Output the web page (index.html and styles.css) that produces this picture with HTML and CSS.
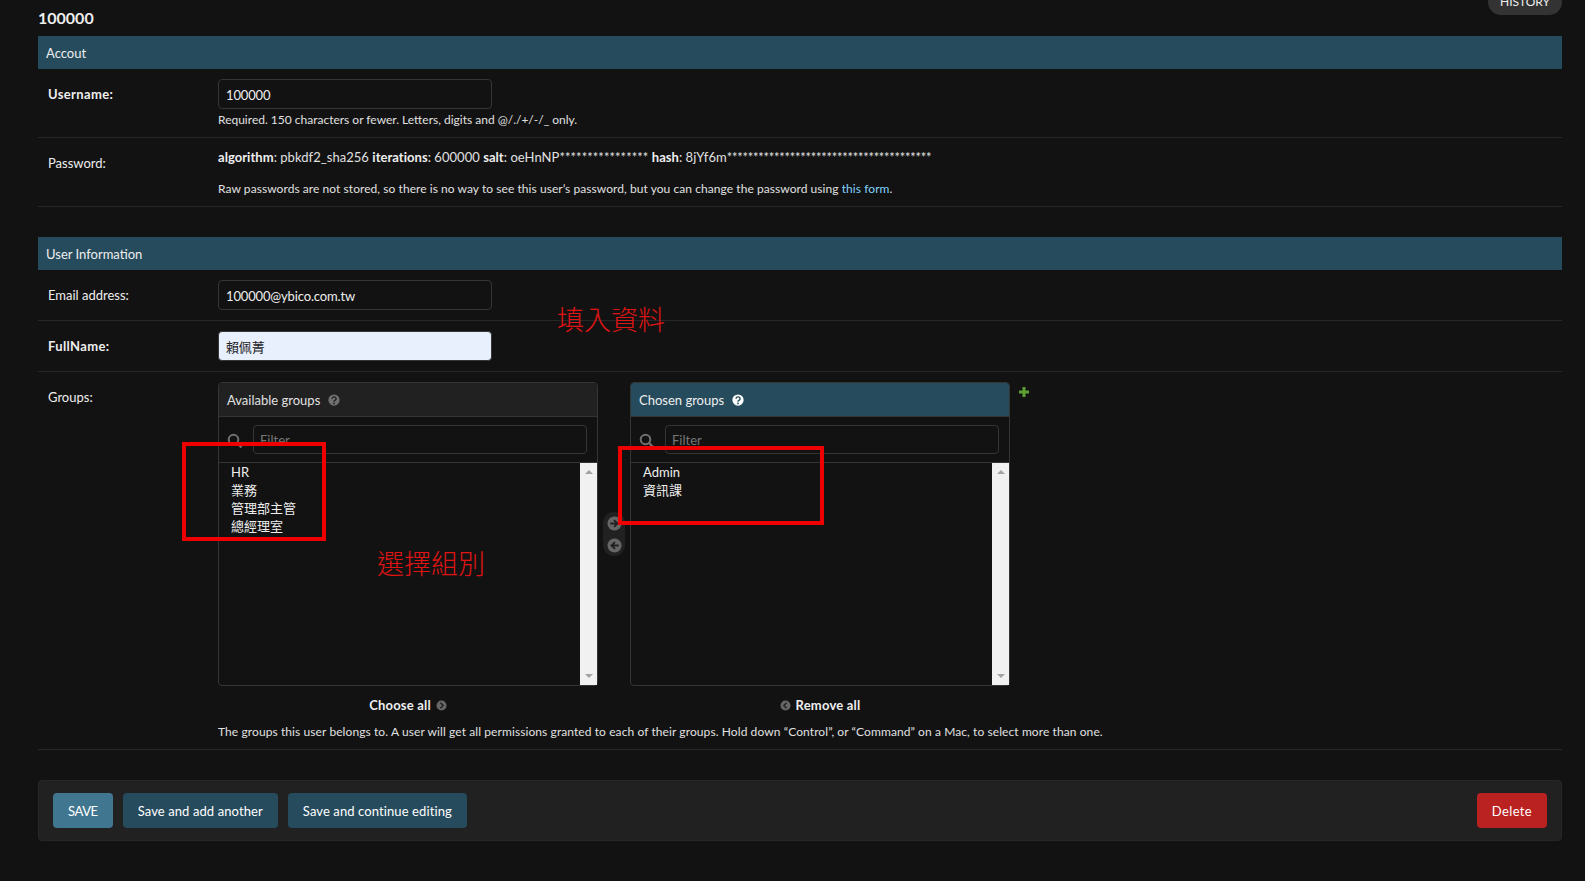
FILE: index.html
```html
<!DOCTYPE html>
<html lang="zh-Hant">
<head>
  <meta charset="UTF-8">
  <title>100000 | Change user</title>
  <link rel="stylesheet" href="styles.css">
</head>
<body>

<div class="content">
  <div class="title-row">
    <h2>100000</h2>
    <a class="history" href="#">History</a>
  </div>

  <form>
    <fieldset>
      <h3 class="bar">Accout</h3>
      <div class="row">
        <label class="required">Username:</label>
        <div class="field">
          <input class="text" type="text" value="100000">
          <p class="help">Required. 150 characters or fewer. Letters, digits and @/./+/-/_ only.</p>
        </div>
      </div>
      <div class="row row-pass">
        <label>Password:</label>
        <div class="field">
          <p class="hash"><strong>algorithm</strong>: pbkdf2_sha256 <strong>iterations</strong>: 600000 <strong>salt</strong>: oeHnNP**************** <strong>hash</strong>: 8jYf6m<span class="mask">***************************************</span></p>
          <p class="help raw">Raw passwords are not stored, so there is no way to see this user’s password, but you can change the password using <a href="#">this form</a>.</p>
        </div>
      </div>
    </fieldset>

    <fieldset>
      <h3 class="bar">User Information</h3>
      <div class="row">
        <label>Email address:</label>
        <div class="field"><input class="text" type="text" value="100000@ybico.com.tw"></div>
      </div>
      <div class="row">
        <label class="required">FullName:</label>
        <div class="field"><input class="text autofill" type="text" value="賴佩菁"></div>
      </div>
      <div class="row">
        <label>Groups:</label>
        <div class="field">
          <div class="selector-wrap">
            <div class="selector">
              <div class="box">
                <div class="box-title">Available groups
                  <svg class="q" viewBox="0 0 16 16"><circle cx="8" cy="8" r="7.5" fill="#707070"/><path d="M5.4 6.2a2.7 2.4 0 1 1 3.9 2.2c-.9.5-1.3.9-1.3 1.8" fill="none" stroke="#212121" stroke-width="1.9"/><circle cx="8" cy="12.6" r="1.2" fill="#212121"/></svg>
                </div>
                <div class="filter">
                  <svg class="search" viewBox="0 0 16 16"><circle cx="6.5" cy="6.5" r="4.8" fill="none" stroke="#707070" stroke-width="2"/><path d="M10 10l4.5 4.5" stroke="#707070" stroke-width="2.4"/></svg>
                  <input class="filter-input" type="text" placeholder="Filter">
                </div>
                <div class="list">
                  <ul>
                    <li>HR</li>
                    <li>業務</li>
                    <li>管理部主管</li>
                    <li>總經理室</li>
                  </ul>
                  <div class="scrollbar"><i class="up"></i><i class="down"></i></div>
                </div>
              </div>

              <div class="arrows">
                <svg viewBox="0 0 16 16"><circle cx="8" cy="8" r="7.5" fill="#666"/><path d="M3.5 8h7M7.5 4.4L11.2 8l-3.7 3.6" fill="none" stroke="#212121" stroke-width="2"/></svg>
                <svg viewBox="0 0 16 16"><circle cx="8" cy="8" r="7.5" fill="#666"/><path d="M12.5 8h-7M8.5 4.4L4.8 8l3.7 3.6" fill="none" stroke="#212121" stroke-width="2"/></svg>
              </div>

              <div class="box">
                <div class="box-title chosen">Chosen groups
                  <svg class="q" viewBox="0 0 16 16"><circle cx="8" cy="8" r="7.5" fill="#fff"/><path d="M5.4 6.2a2.7 2.4 0 1 1 3.9 2.2c-.9.5-1.3.9-1.3 1.8" fill="none" stroke="#264b5d" stroke-width="1.9"/><circle cx="8" cy="12.6" r="1.2" fill="#264b5d"/></svg>
                </div>
                <div class="filter">
                  <svg class="search" viewBox="0 0 16 16"><circle cx="6.5" cy="6.5" r="4.8" fill="none" stroke="#707070" stroke-width="2"/><path d="M10 10l4.5 4.5" stroke="#707070" stroke-width="2.4"/></svg>
                  <input class="filter-input" type="text" placeholder="Filter">
                </div>
                <div class="list">
                  <ul>
                    <li>Admin</li>
                    <li>資訊課</li>
                  </ul>
                  <div class="scrollbar"><i class="up"></i><i class="down"></i></div>
                </div>
              </div>

              <a class="all" href="#">Choose all
                <svg viewBox="0 0 12 12"><circle cx="6" cy="6" r="5.5" fill="#666"/><path d="M4.8 3l3 3-3 3" fill="none" stroke="#212121" stroke-width="1.6"/></svg>
              </a>
              <span></span>
              <a class="all" href="#">
                <svg viewBox="0 0 12 12"><circle cx="6" cy="6" r="5.5" fill="#666"/><path d="M7.2 3l-3 3 3 3" fill="none" stroke="#212121" stroke-width="1.6"/></svg>
                Remove all</a>
            </div>
            <svg class="add" viewBox="0 0 12 12"><path d="M6 1v10M1 6h10" stroke="#5c9e31" stroke-width="3"/></svg>
          </div>
          <p class="help groups-help">The groups this user belongs to. A user will get all permissions granted to each of their groups. Hold down “Control”, or “Command” on a Mac, to select more than one.</p>
        </div>
      </div>
    </fieldset>

    <div class="submit-row">
      <button class="btn default" type="button">SAVE</button>
      <button class="btn" type="button">Save and add another</button>
      <button class="btn" type="button">Save and continue editing</button>
      <a class="btn delete" href="#">Delete</a>
    </div>
  </form>
</div>

<!-- red notes drawn over the screenshot -->
<div class="note note-fill">填入資料</div>
<div class="note note-pick">選擇組別</div>
<div class="frame frame-left"></div>
<div class="frame frame-right"></div>

</body>
</html>
```

FILE: styles.css
```css
* {
  box-sizing: border-box;
}
html, body {
  height: 100%;
}
body {
  margin: 0;
  position: relative;
  overflow: hidden;
  background: #121212;
  color: #eeeeee;
  font-family: Lato, "Noto Sans CJK TC", sans-serif;
  font-size: 13px;
  line-height: 18px;
}
.content {
  padding: 0 23px 0 38px;
}
.title-row {
  display: flex;
  justify-content: space-between;
  align-items: flex-start;
  height: 36px;
}
.title-row h2 {
  margin: 0;
  font-size: 16px;
  line-height: 35px;
}
.history {
  margin-top: -11px;
  width: 74px;
  height: 26px;
  border-radius: 15px;
  background: #333333;
  color: #eeeeee;
  font-size: 12px;
  line-height: 26px;
  text-align: center;
  text-transform: uppercase;
  text-decoration: none;
}
fieldset {
  margin: 0 0 30px;
  padding: 0;
  border: 0;
  min-width: 0;
}
.bar {
  margin: 0;
  height: 33px;
  padding: 1px 8px 0;
  background: #264b5d;
  color: #eeeeee;
  font-size: 13px;
  font-weight: 400;
  line-height: 33px;
}
.row {
  display: flex;
  padding: 10px;
  border-bottom: 1px solid #272727;
}
.row label {
  flex: 0 0 170px;
  line-height: 30px;
}
.row label.required {
  font-weight: 700;
  letter-spacing: .35px;
}
.field {
  flex: 1;
  min-width: 0;
}
.field p {
  margin: 0;
}
.text {
  display: block;
  width: 274px;
  height: 30px;
  padding: 2px 7px 0;
  border: 1px solid #353535;
  border-radius: 4px;
  background: #121212;
  color: #eeeeee;
  font: inherit;
  letter-spacing: -.15px;
}
.text.autofill {
  padding-top: 0;
  background: #e8f0fe;
  color: #222222;
}
.help {
  color: #e0e0e0;
  font-size: 12px;
  line-height: 16px;
}
.field .text + .help {
  margin-bottom: -1px;
  padding-top: 3px;
}
.row-pass {
  padding-bottom: 9px;
}
.hash {
  font-size: 13px;
  color: #e0e0e0;
  letter-spacing: .04px;
}
.hash strong {
  color: #eeeeee;
}
.mask {
  letter-spacing: -.28px;
}
.field .raw {
  margin-top: 15px;
  letter-spacing: .06px;
}
.raw a {
  color: #81d4fa;
  text-decoration: none;
}
.field .groups-help {
  margin-bottom: -1px;
  letter-spacing: .09px;
}
.selector-wrap {
  display: flex;
  align-items: flex-start;
  gap: 8px;
}
.selector {
  display: grid;
  grid-template-columns: 380px 32px 380px;
}
.box {
  height: 304px;
  display: flex;
  flex-direction: column;
  border: 1px solid #353535;
  border-radius: 4px;
}
.box-title {
  height: 34px;
  padding: 0 8px;
  display: flex;
  align-items: center;
  gap: 8px;
  border-bottom: 1px solid #353535;
  border-radius: 3px 3px 0 0;
  background: #212121;
  color: #e0e0e0;
}
.box-title.chosen {
  background: #264b5d;
  color: #eeeeee;
}
.q {
  width: 12px;
  height: 12px;
}
.filter {
  height: 46px;
  padding: 8px 10px 8px 8px;
  display: flex;
  align-items: flex-start;
  gap: 10px;
  border-bottom: 1px solid #353535;
}
.search {
  flex: none;
  width: 16px;
  height: 16px;
  margin-top: 8px;
}
.filter-input {
  flex: 1;
  min-width: 0;
  height: 29px;
  padding: 1px 6px 0;
  border: 1px solid #353535;
  border-radius: 4px;
  background: #121212;
  color: #eeeeee;
  font: inherit;
}
.filter-input::placeholder {
  color: #757575;
}
.list {
  flex: 1;
  display: flex;
  min-height: 0;
}
.list ul {
  flex: 1;
  margin: 0;
  padding: 0 0 0 12px;
  list-style: none;
}
.scrollbar {
  flex: 0 0 17px;
  display: flex;
  flex-direction: column;
  justify-content: space-between;
  align-items: center;
  padding: 7px 0;
  background: #f1f1f1;
}
.scrollbar i {
  width: 0;
  height: 0;
  border-left: 4px solid transparent;
  border-right: 4px solid transparent;
}
.scrollbar .up {
  border-bottom: 4px solid #a3a3a3;
}
.scrollbar .down {
  border-top: 4px solid #a3a3a3;
}
.arrows {
  align-self: center;
  justify-self: center;
  width: 22px;
  height: 44px;
  display: flex;
  flex-direction: column;
  align-items: center;
  justify-content: center;
  gap: 7px;
  border-radius: 11px;
  background: #212121;
}
.arrows svg {
  width: 15px;
  height: 15px;
}
.all {
  display: flex;
  justify-content: center;
  align-items: center;
  gap: 5px;
  height: 38px;
  color: #eeeeee;
  font-weight: 700;
  letter-spacing: .2px;
  text-decoration: none;
}
.all svg {
  width: 11px;
  height: 11px;
}
.add {
  width: 12px;
  height: 12px;
  margin-top: 4px;
}
.submit-row {
  display: flex;
  gap: 10px;
  padding: 12px 14px;
  height: 61px;
  border: 1px solid #272727;
  border-radius: 4px;
  background: #212121;
}
.btn {
  height: 35px;
  padding: 1px 15px 0;
  border: 0;
  border-radius: 4px;
  background: #264b5d;
  color: #ffffff;
  font: inherit;
  letter-spacing: .1px;
  line-height: 34px;
  text-decoration: none;
}
.btn.default {
  background: #417690;
  letter-spacing: -.4px;
}
.btn.delete {
  margin-left: auto;
  background: #ba2121;
  letter-spacing: .35px;
}
.note {
  position: absolute;
  color: #e01414;
  font-family: "Noto Sans CJK TC", sans-serif;
  font-size: 27px;
  font-weight: 300;
  line-height: 34px;
}
.note-fill {
  left: 557px;
  top: 302px;
}
.note-pick {
  left: 377px;
  top: 546px;
}
.frame {
  position: absolute;
  border: 4px solid #ee0000;
}
.frame-left {
  left: 182px;
  top: 442px;
  width: 144px;
  height: 99px;
}
.frame-right {
  left: 618px;
  top: 446px;
  width: 206px;
  height: 79px;
}
```
